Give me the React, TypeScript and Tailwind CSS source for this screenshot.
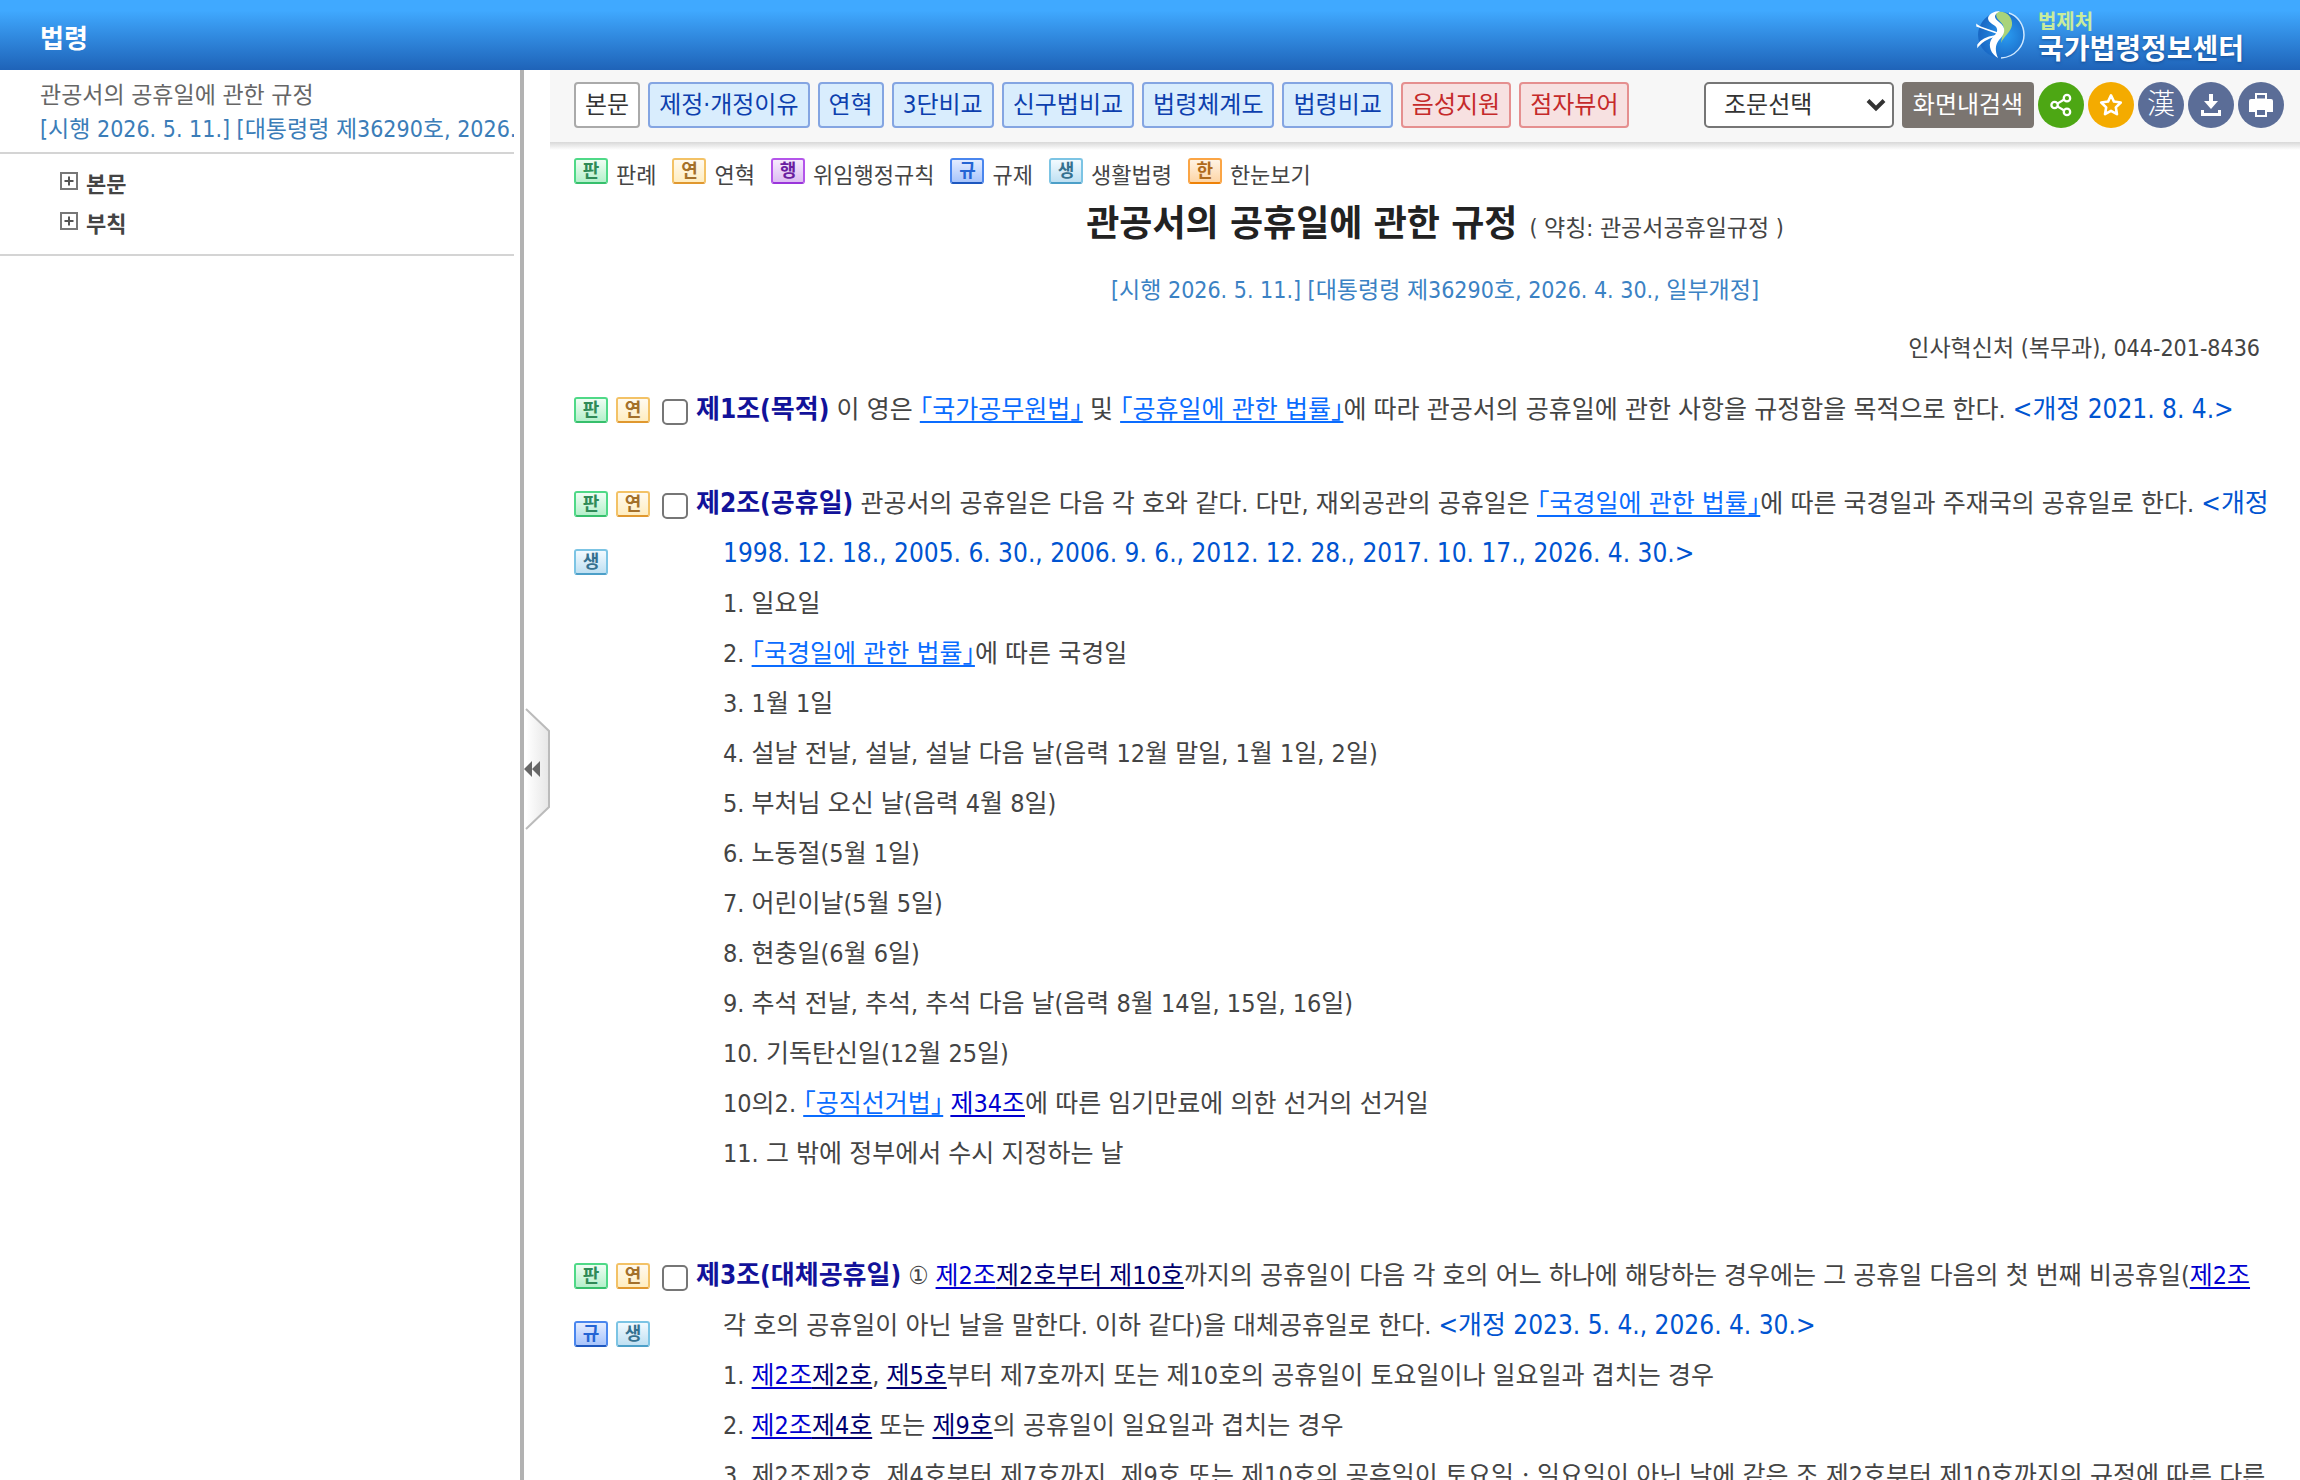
import { useState } from 'react';
import type { ReactNode } from 'react';
import clsx from 'clsx';

type BadgeKind = 'pan' | 'yeon' | 'haeng' | 'gyu' | 'saeng' | 'han';

const badgeStyles: Record<BadgeKind, { text: string; style: string }> = {
  pan: { text: '판', style: 'border-[#4fd987] border-b-[#36bf6c] from-[#effdf4] to-[#b4f0cb] text-[#2f8a57]' },
  yeon: { text: '연', style: 'border-[#f3c266] border-b-[#e0982f] from-[#fffaf0] to-[#ffedc0] text-[#a4702a]' },
  haeng: { text: '행', style: 'border-[#b455ea] border-b-[#9a35da] from-[#f6ecfd] to-[#ddbdf3] text-[#6a1ea0]' },
  gyu: { text: '규', style: 'border-[#4a86ee] border-b-[#1d57bf] from-[#e4ecff] to-[#a8c4fb] text-[#2464d4]' },
  saeng: { text: '생', style: 'border-[#7cc4e4] border-b-[#4c9fc8] from-[#f2faff] to-[#bfe0f2] text-[#35718f]' },
  han: { text: '한', style: 'border-[#fba545] border-b-[#ee8208] from-[#fff3e4] to-[#fdd5a6] text-[#b06a1c]' },
};

function Badge({ kind }: { kind: BadgeKind }) {
  const { text, style } = badgeStyles[kind];
  return (
    <span
      className={clsx(
        'inline-flex h-[26px] w-[34px] shrink-0 items-center justify-center rounded-[3px] border-2 bg-linear-to-b text-[18px] leading-[20px] font-bold',
        style,
      )}
    >
      {text}
    </span>
  );
}

// 상단 탭 버튼
const tabs = [
  { label: '본문', tone: 'plain' },
  { label: '제정·개정이유', tone: 'blue' },
  { label: '연혁', tone: 'blue' },
  { label: '3단비교', tone: 'blue' },
  { label: '신구법비교', tone: 'blue' },
  { label: '법령체계도', tone: 'blue' },
  { label: '법령비교', tone: 'blue' },
  { label: '음성지원', tone: 'red' },
  { label: '점자뷰어', tone: 'red' },
] as const;

const tones = {
  plain: 'border-[#aaaaaa] bg-white text-[#333333]',
  blue: 'border-[#84a5e2] bg-[#d9edfd] text-[#0d3fae]',
  red: 'border-[#e58f8f] bg-[#f7e1e1] text-[#c52a2a]',
};

const legend: { kind: BadgeKind; label: string }[] = [
  { kind: 'pan', label: '판례' },
  { kind: 'yeon', label: '연혁' },
  { kind: 'haeng', label: '위임행정규칙' },
  { kind: 'gyu', label: '규제' },
  { kind: 'saeng', label: '생활법령' },
  { kind: 'han', label: '한눈보기' },
];

function Law({ children }: { children: ReactNode }) {
  return (
    <a href="#law" className="text-[#0a6cff] underline decoration-2 underline-offset-[3px] [font-feature-settings:'halt']">
      {children}
    </a>
  );
}

function Jo({ children }: { children: ReactNode }) {
  return (
    <a href="#jo" className="text-[#0000d0] underline decoration-2 underline-offset-[3px]">
      {children}
    </a>
  );
}

function Ho({ children }: { children: ReactNode }) {
  return (
    <a href="#ho" className="text-[#00006e] underline decoration-2 underline-offset-[3px]">
      {children}
    </a>
  );
}

function Rev({ children }: { children: ReactNode }) {
  return <span className="text-[26px] leading-none text-[#0054d1]">{children}</span>;
}

function Article({
  id,
  badges,
  title,
  lead,
  items = [],
}: {
  id: string;
  badges: BadgeKind[];
  title: string;
  lead: ReactNode;
  items?: ReactNode[];
}) {
  return (
    <section className="flex">
      <div className="flex w-[88px] shrink-0 flex-wrap content-start gap-x-2 gap-y-8 pt-3">
        {badges.map((kind) => (
          <Badge key={kind} kind={kind} />
        ))}
      </div>
      <input
        type="checkbox"
        id={id}
        className="mt-[14px] mr-2 h-[26px] w-[26px] shrink-0 appearance-none rounded-[5px] border-2 border-[#767676] bg-white checked:bg-[#0a6cff]"
      />
      <div className="min-w-0 flex-1 pl-[27px] text-[25px] leading-[50px] whitespace-nowrap text-[#444444]">
        <p className="-indent-[27px]">
          <label htmlFor={id} className="text-[26px] leading-none font-bold text-[#12129a]">
            {title}
          </label>{' '}
          {lead}
        </p>
        {items.length > 0 && (
          <ol>
            {items.map((item, i) => (
              <li key={i}>{item}</li>
            ))}
          </ol>
        )}
      </div>
    </section>
  );
}

function Logo() {
  return (
    <a href="#home" className="flex items-center gap-3">
      <svg width="52" height="52" viewBox="0 0 52 52" aria-hidden="true">
        <defs>
          <radialGradient id="globe" cx="0.6" cy="0.5" r="0.55">
            <stop offset="0" stopColor="#2a9cf2" />
            <stop offset="1" stopColor="#1a6ac6" />
          </radialGradient>
        </defs>
        <circle cx="27" cy="26" r="23" fill="url(#globe)" />
        <path d="M23 3c9-2 16 5 15 13-1 7-8 11-11 18 1-8 4-13 2-18-3-5-9-7-6-13z" fill="#a9d37a" />
        <path d="M26 2c-7 4-6 7-1 11 8 6 6 12 0 18-4 5-4 11-1 18-7-4-10-12-7-18 3-5 7-7 6-11-1-5-9-5-9-11 1-4 6-7 12-7z" fill="#fff" />
        <path d="M3 16c5 4 13 5 20 8L3 17zM4 36c3-5 9-8 17-9-7 2-13 5-17 10z" fill="#fff" stroke="#fff" strokeWidth="1.500" />
        <path d="M35 4c9 3 15 12 15 22S42 48 27 49" stroke="#cfe8ff" strokeWidth="1.500" fill="none" />
      </svg>
      <span className="flex flex-col pt-[6px] font-bold">
        <span className="text-[20px] leading-[24px] text-[#c8ec9c]">법제처</span>
        <span className="text-[28px] leading-[32px] text-white [text-shadow:0_1px_3px_rgb(10_50_110/0.6)]">국가법령정보센터</span>
      </span>
    </a>
  );
}

function ShareIcon() {
  return (
    <svg width="22" height="24" viewBox="0 0 24 26" fill="none" stroke="#fff" strokeWidth="2.5" aria-hidden="true">
      <circle cx="5" cy="13" r="3.5" />
      <circle cx="18.500" cy="5.500" r="3.500" />
      <circle cx="18.500" cy="20.500" r="3.500" />
      <path d="M8 11.500l7.500-4.500M8 14.500l7.500 4.500" />
    </svg>
  );
}

function StarIcon() {
  return (
    <svg width="24" height="24" viewBox="0 0 26 26" fill="none" stroke="#fff" strokeWidth="2.800" strokeLinejoin="round" aria-hidden="true">
      <path d="M13 2.500l3.200 6.800 7.400 1-5.400 5.200 1.300 7.500L13 19.400 6.500 23l1.300-7.500-5.400-5.200 7.400-1z" />
    </svg>
  );
}

function DownloadIcon() {
  return (
    <svg width="22" height="24" viewBox="0 0 22 24" fill="#fff" aria-hidden="true">
      <path d="M9 1h4v7h5l-7 8-7-8h5z" />
      <path d="M1 17h3v3h14v-3h3v6H1z" />
    </svg>
  );
}

function PrintIcon() {
  return (
    <svg width="26" height="26" viewBox="0 0 26 26" aria-hidden="true">
      <path d="M1 9a2 2 0 0 1 2-2h20a2 2 0 0 1 2 2v11H1z" fill="#fff" />
      <path d="M8 2h10v5.500H8zM8 17h10v7H8z" fill="#5b6d97" stroke="#fff" strokeWidth="2" />
    </svg>
  );
}

const tools = [
  { label: '공유', color: 'bg-[#4da714]', icon: <ShareIcon /> },
  { label: '즐겨찾기', color: 'bg-[#f4ab00]', icon: <StarIcon /> },
  { label: '한자', color: 'bg-[#5b6d97]', icon: <span className="text-[28px] leading-none font-light">漢</span> },
  { label: '저장', color: 'bg-[#5b6d97]', icon: <DownloadIcon /> },
  { label: '인쇄', color: 'bg-[#5b6d97]', icon: <PrintIcon /> },
];

function Toolbar() {
  return (
    <div className="flex h-[72px] shrink-0 items-start bg-[#f7f7f7] pt-3 pr-4 pl-6">
      <nav className="flex gap-2">
        {tabs.map(({ label, tone }) => (
          <button
            key={label}
            className={clsx('h-[46px] rounded-[4px] border-2 px-[9px] text-[24px] leading-[40px] whitespace-nowrap', tones[tone])}
          >
            {label}
          </button>
        ))}
      </nav>
      <div className="ml-auto flex items-center gap-1">
        <div className="relative mr-1">
          <select
            aria-label="조문선택"
            className="h-[46px] w-[190px] appearance-none rounded-[5px] border-2 border-[#767676] bg-white pl-[18px] text-[24px] leading-[40px] text-[#333333]"
          >
            <option>조문선택</option>
            <option>제1조</option>
            <option>제2조</option>
            <option>제3조</option>
          </select>
          <svg className="pointer-events-none absolute top-4 right-2" width="20" height="14" viewBox="0 0 20 14" aria-hidden="true">
            <path d="M2 2.500l8 8 8-8" stroke="#333" strokeWidth="4" fill="none" />
          </svg>
        </div>
        <button className="h-[46px] w-[132px] rounded-[4px] bg-[#7b7570] text-[24px] leading-[40px] whitespace-nowrap text-white">
          화면내검색
        </button>
        {tools.map(({ label, color, icon }) => (
          <button
            key={label}
            aria-label={label}
            className={clsx('flex h-[46px] w-[46px] items-center justify-center rounded-full text-white', color)}
          >
            {icon}
          </button>
        ))}
      </div>
    </div>
  );
}

function Sidebar() {
  return (
    <aside className="w-[514px] shrink-0">
      <div className="h-[84px] overflow-hidden border-b-2 border-[#d4d4d4] pt-2 pl-10 text-[23px] leading-[34px] whitespace-nowrap">
        <h2 className="text-[#666666]">관공서의 공휴일에 관한 규정</h2>
        <p className="text-[#3b7db8]">[시행 2026. 5. 11.] [대통령령 제36290호, 2026. 4. 30., 일부개정]</p>
      </div>
      <ul className="border-b-2 border-[#d4d4d4] pt-[11px] pb-[9px] pl-[60px] text-[22px] leading-[40px] font-bold text-[#444444]">
        {['본문', '부칙'].map((label) => (
          <li key={label} className="flex gap-2">
            <button aria-label={`${label} 펼치기`} className="self-start pt-[7px]">
              <svg width="18" height="18" viewBox="0 0 18 18" aria-hidden="true">
                <rect x="1" y="1" width="16" height="16" fill="#fff" stroke="#777" strokeWidth="2" />
                <path d="M9 4.500v9M4.500 9h9" stroke="#555" strokeWidth="2" />
              </svg>
            </button>
            <a href="#part">{label}</a>
          </li>
        ))}
      </ul>
    </aside>
  );
}

const article2 = [
  <>1. 일요일</>,
  <>2. <Law>「국경일에 관한 법률」</Law>에 따른 국경일</>,
  <>3. 1월 1일</>,
  <>4. 설날 전날, 설날, 설날 다음 날(음력 12월 말일, 1월 1일, 2일)</>,
  <>5. 부처님 오신 날(음력 4월 8일)</>,
  <>6. 노동절(5월 1일)</>,
  <>7. 어린이날(5월 5일)</>,
  <>8. 현충일(6월 6일)</>,
  <>9. 추석 전날, 추석, 추석 다음 날(음력 8월 14일, 15일, 16일)</>,
  <>10. 기독탄신일(12월 25일)</>,
  <>10의2. <Law>「공직선거법」</Law> <Jo>제34조</Jo>에 따른 임기만료에 의한 선거의 선거일</>,
  <>11. 그 밖에 정부에서 수시 지정하는 날</>,
];

const article3 = [
  <>1. <Jo>제2조</Jo><Ho>제2호</Ho>, <Ho>제5호</Ho>부터 제7호까지 또는 제10호의 공휴일이 토요일이나 일요일과 겹치는 경우</>,
  <>2. <Jo>제2조</Jo><Ho>제4호</Ho> 또는 <Ho>제9호</Ho>의 공휴일이 일요일과 겹치는 경우</>,
  <>3. 제2조제2호, 제4호부터 제7호까지, 제9호 또는 제10호의 공휴일이 토요일ㆍ일요일이 아닌 날에 같은 조 제2호부터 제10호까지의 규정에 따른 다른</>,
];

export default function App() {
  const [open, setOpen] = useState(true);

  return (
    <div className="flex h-screen flex-col overflow-hidden bg-white font-['DejaVu_Sans_Condensed','Noto_Sans_CJK_KR',sans-serif]">
      <header className="flex h-[70px] shrink-0 items-center justify-between bg-linear-to-b from-[#40a9ff] from-15% to-[#1f63b8] pr-14 pl-10">
        <h1 className="pt-2 text-[26px] font-bold text-white">법령</h1>
        <Logo />
      </header>

      <div className="flex min-h-0 flex-1">
        {open && <Sidebar />}

        {/* 목차 접기 */}
        <div className="ml-[6px] flex w-[30px] shrink-0 items-center border-l-4 border-[#b2b2b2] pb-3">
          <button aria-label="목차 접기" onClick={() => setOpen(!open)}>
            <svg width="26" height="124" viewBox="0 0 26 124" aria-hidden="true">
              <defs>
                <linearGradient id="handle">
                  <stop offset="0" stopColor="#fff" />
                  <stop offset="1" stopColor="#e6e6e6" />
                </linearGradient>
              </defs>
              <path d="M2 2l23 22v76L2 122z" fill="url(#handle)" />
              <path d="M2 2l23 22v76L2 122" fill="none" stroke="#bbb" strokeWidth="2" />
              <path d="M8 54v16L0 62zM16 54v16L8 62z" fill="#666" />
            </svg>
          </button>
        </div>

        <main className="flex min-w-0 flex-1 flex-col">
          <Toolbar />
          <div className="h-2 shrink-0 bg-linear-to-b from-[#d8d8d8] to-white" />

          <div className="min-h-0 flex-1 overflow-hidden pt-2 pr-4 pl-6">
            <ul className="flex gap-4 text-[22px] leading-[36px] text-[#444444]">
              {legend.map(({ kind, label }) => (
                <li key={kind} className="flex items-start gap-2">
                  <Badge kind={kind} />
                  {label}
                </li>
              ))}
            </ul>

            <div className="flex h-[60px] items-baseline justify-center gap-3 pl-3">
              <h2 className="text-[36px] leading-[60px] font-bold text-[#222222]">관공서의 공휴일에 관한 규정</h2>
              <span className="text-[23px] text-[#444444]">( 약칭: 관공서공휴일규정 )</span>
            </div>
            <p className="mt-[18px] pl-3 text-center text-[23px] leading-[36px] text-[#3b82c4]">
              [시행 2026. 5. 11.] [대통령령 제36290호, 2026. 4. 30., 일부개정]
            </p>
            <p className="mt-[22px] pr-6 text-right text-[23px] leading-[36px] text-[#444444]">인사혁신처 (복무과), 044-201-8436</p>

            <div className="pt-[19px]">
              <Article
                id="article-1"
                badges={['pan', 'yeon']}
                title="제1조(목적)"
                lead={
                  <>
                    이 영은 <Law>「국가공무원법」</Law> 및 <Law>「공휴일에 관한 법률」</Law>에 따라 관공서의 공휴일에 관한 사항을 규정함을
                    목적으로 한다. <Rev>&lt;개정 2021. 8. 4.&gt;</Rev>
                  </>
                }
              />
            </div>
            <div className="pt-11">
              <Article
                id="article-2"
                badges={['pan', 'yeon', 'saeng']}
                title="제2조(공휴일)"
                lead={
                  <>
                    관공서의 공휴일은 다음 각 호와 같다. 다만, 재외공관의 공휴일은 <Law>「국경일에 관한 법률」</Law>에 따른 국경일과 주재국의
                    공휴일로 한다.{' '}
                    <Rev>
                      &lt;개정
                      <br />
                      1998. 12. 18., 2005. 6. 30., 2006. 9. 6., 2012. 12. 28., 2017. 10. 17., 2026. 4. 30.&gt;
                    </Rev>
                  </>
                }
                items={article2}
              />
            </div>
            <div className="pt-[72px]">
              <Article
                id="article-3"
                badges={['pan', 'yeon', 'gyu', 'saeng']}
                title="제3조(대체공휴일)"
                lead={
                  <>
                    ① <Jo>제2조</Jo>
                    <Ho>제2호부터 제10호</Ho>까지의 공휴일이 다음 각 호의 어느 하나에 해당하는 경우에는 그 공휴일 다음의 첫 번째
                    비공휴일(<Jo>제2조</Jo>
                    <br />각 호의 공휴일이 아닌 날을 말한다. 이하 같다)을 대체공휴일로 한다. <Rev>&lt;개정 2023. 5. 4., 2026. 4. 30.&gt;</Rev>
                  </>
                }
                items={article3}
              />
            </div>
          </div>
        </main>
      </div>
    </div>
  );
}
